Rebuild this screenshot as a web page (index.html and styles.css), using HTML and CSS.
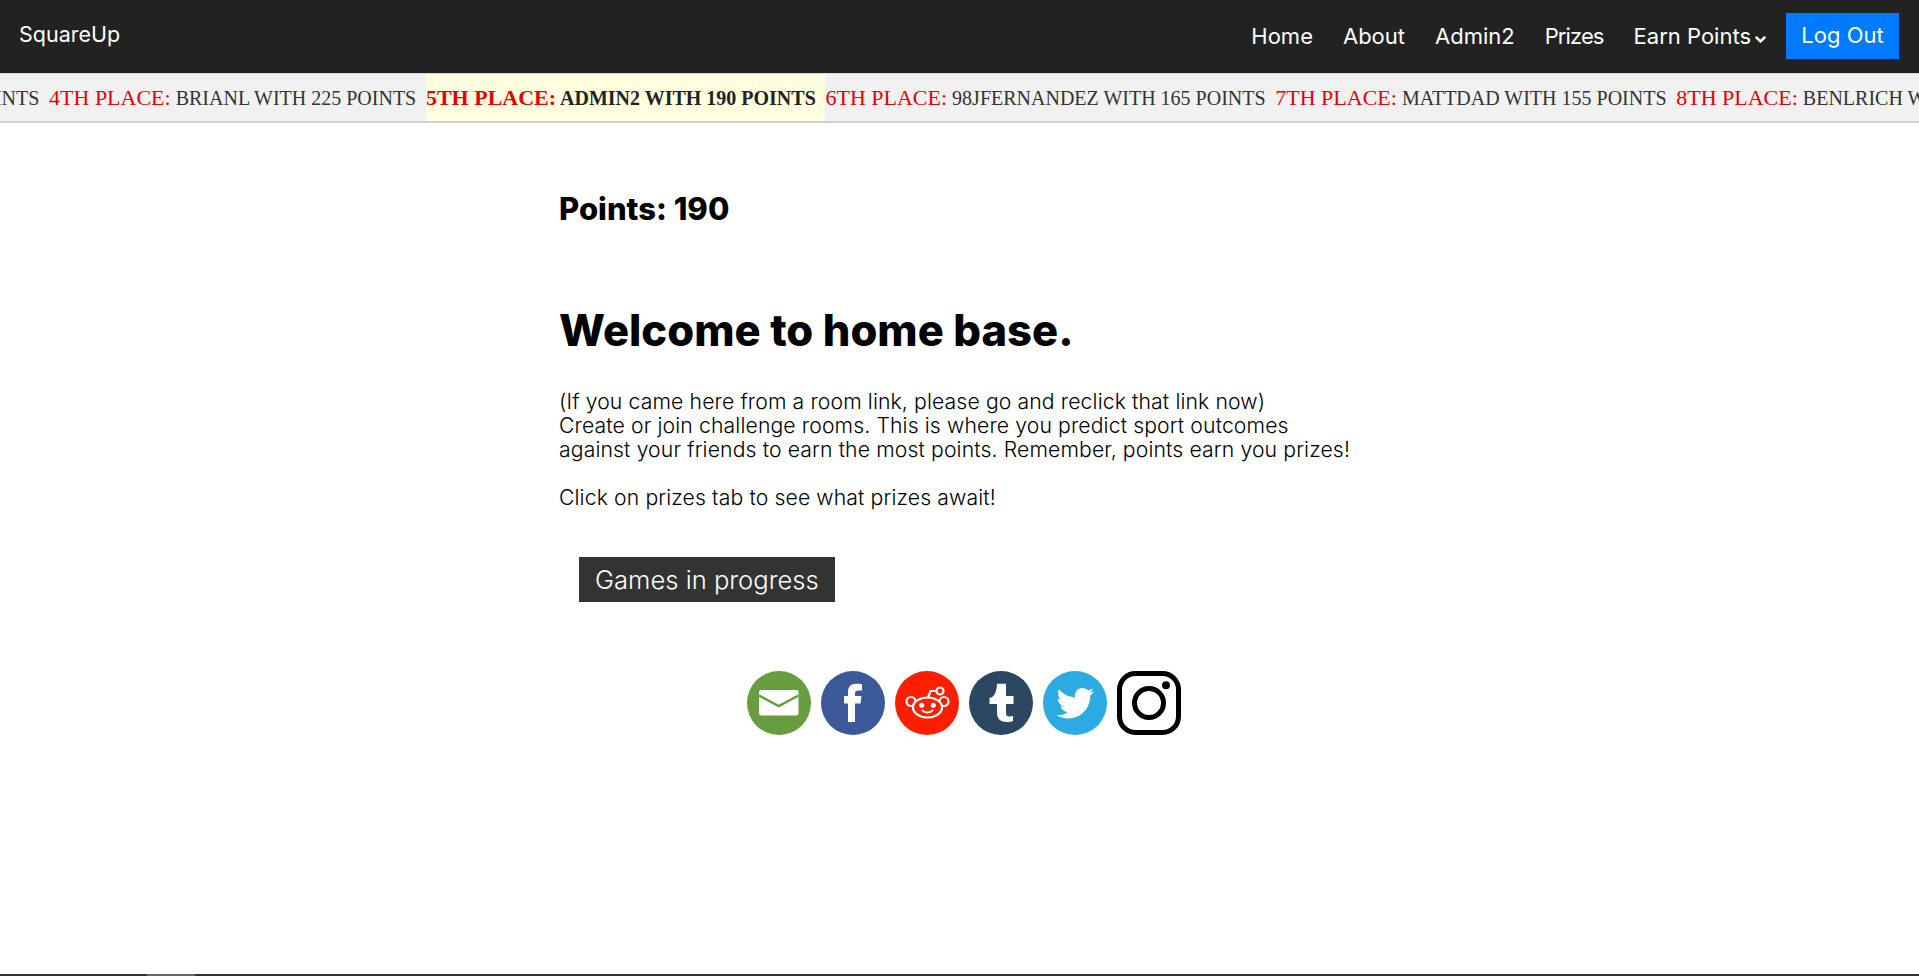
FILE: index.html
```html
<!DOCTYPE html>
<html lang="en">
<head>
  <meta charset="UTF-8" />
  <title>SquareUp</title>
  <link rel="stylesheet" href="styles.css">
</head>
<body>
  <nav class="navbar">
    <a class="brand" href="#">SquareUp</a>
    <ul class="nav-links">
      <li><a href="#">Home</a></li>
      <li><a href="#">About</a></li>
      <li><a href="#">Admin2</a></li>
      <li><a class="nav-tight" href="#">Prizes</a></li>
      <li>
        <a href="#">Earn Points<svg class="caret" viewBox="0 0 11 8" width="11" height="8"><path d="M1.500 1.500l4 4 4-4" fill="none" stroke="#fff" stroke-width="2.500" stroke-linecap="round"/></svg></a>
      </li>
      <li><a class="logout-btn" href="#">Log Out</a></li>
    </ul>
  </nav>

  <div class="ticker">
    <div class="ticker-track">
      <span class="ticker-item"><span class="place">3RD PLACE:</span> ADMIN WITH 230 POINTS</span>
      <span class="ticker-item"><span class="place">4TH PLACE:</span> BRIANL WITH 225 POINTS</span>
      <span class="ticker-item current"><span class="place">5TH PLACE:</span> ADMIN2 WITH 190 POINTS</span>
      <span class="ticker-item"><span class="place">6TH PLACE:</span> 98JFERNANDEZ WITH 165 POINTS</span>
      <span class="ticker-item"><span class="place">7TH PLACE:</span> MATTDAD WITH 155 POINTS</span>
      <span class="ticker-item"><span class="place">8TH PLACE:</span> BENLRICH WITH 150 POINTS</span>
    </div>
  </div>

  <main class="content">
    <h3 class="points">Points: 190</h3>
    <h1 class="welcome">Welcome to home base.</h1>
    <p class="intro">
      (If you came here from a room link, please go and reclick that link now)<br>
      Create or join challenge rooms. This is where you predict sport outcomes<br>
      against your friends to earn the most points. Remember, points earn you prizes!<br>
      <br>
      Click on prizes tab to see what prizes await!
    </p>
    <a class="games-btn" href="#">Games in progress</a>

    <div class="share-row">
      <a href="#" aria-label="Email">
        <svg class="share-icon" viewBox="0 0 64 64">
          <circle cx="32" cy="32" r="32" fill="#659d3f"/>
          <rect x="12" y="19" width="39.500" height="25.500" rx="2" fill="#fff"/>
          <path d="M12 24.500l19.750 10.500L51.500 24.500" fill="none" stroke="#659d3f" stroke-width="2.500"/>
        </svg>
      </a>
      <a href="#" aria-label="Facebook">
        <svg class="share-icon" viewBox="0 0 64 64">
          <circle cx="32" cy="32" r="32" fill="#3b5998"/>
          <path d="M27 51V32.500h-4V25h4v-4c0-5.500 3-8.300 8-8.300 2.300 0 4.500.2 6 .4v6.500h-3.500c-2.800 0-3.500 1.200-3.500 3.200V25h6.500l-1 7.500h-5.500V51z" fill="#fff"/>
        </svg>
      </a>
      <a href="#" aria-label="Reddit">
        <svg class="share-icon" viewBox="0 0 64 64">
          <circle cx="32" cy="32" r="32" fill="#ff1f00"/>
          <g fill="none" stroke="#fff" stroke-width="2.200">
            <circle cx="16" cy="30.500" r="4.500"/>
            <circle cx="49" cy="30.500" r="4.500"/>
            <ellipse cx="32.500" cy="36.500" rx="14.500" ry="10" fill="#ff1f00"/>
            <circle cx="45" cy="20" r="3.500"/>
            <path d="M33 26.500l2.500-6.500h6"/>
            <path d="M27.500 39.500c3 2.600 7 2.600 10 0" stroke-linecap="round"/>
          </g>
          <circle cx="26.700" cy="34.300" r="2.500" fill="#fff"/>
          <circle cx="38.300" cy="34.300" r="2.500" fill="#fff"/>
        </svg>
      </a>
      <a href="#" aria-label="Tumblr">
        <svg class="share-icon" viewBox="0 0 64 64">
          <circle cx="32" cy="32" r="32" fill="#2c4762"/>
          <path d="M28 12.700h9V25h7.500v8H37v9c0 2.500 1 3.500 3.500 3.500 1.300 0 2.700-.3 3.500-.7V50c-1.500.7-3.500 1-6 1-6.500 0-10-3-10-9.500V33h-7.500v-6c4.500-1 7-5 7.500-14.300z" fill="#fff"/>
        </svg>
      </a>
      <a href="#" aria-label="Twitter">
        <svg class="share-icon" viewBox="0 0 64 64">
          <circle cx="32" cy="32" r="32" fill="#2caae2"/>
          <path d="M51 20.500c-1.400.6-2.900 1-4.400 1.200 1.600-1 2.800-2.500 3.400-4.300-1.500.9-3.100 1.500-4.900 1.900-1.400-1.500-3.400-2.400-5.600-2.400-4.300 0-7.700 3.500-7.700 7.700 0 .6.100 1.200.2 1.800-6.400-.3-12.100-3.400-15.900-8.100-.7 1.100-1.100 2.500-1.100 3.900 0 2.700 1.400 5 3.400 6.400-1.300 0-2.500-.4-3.500-1v.1c0 3.700 2.700 6.900 6.200 7.600-.6.200-1.300.3-2 .3-.5 0-1 0-1.500-.1 1 3.100 3.900 5.300 7.200 5.400-2.700 2.100-6 3.300-9.600 3.300-.6 0-1.200 0-1.800-.1 3.400 2.200 7.500 3.500 11.800 3.500 14.200 0 22-11.800 22-22v-1c1.500-1.100 2.800-2.500 3.800-4z" fill="#fff"/>
        </svg>
      </a>
      <a href="#" aria-label="Instagram">
        <svg class="share-icon" viewBox="0 0 64 64">
          <rect x="2.500" y="2.500" width="59" height="59" rx="16" fill="#fff" stroke="#000" stroke-width="5"/>
          <circle cx="32" cy="32" r="14.500" fill="none" stroke="#000" stroke-width="5"/>
          <circle cx="49" cy="14.300" r="4" fill="#000"/>
        </svg>
      </a>
    </div>
  </main>

  <div class="page-scroll"><div class="page-scroll-thumb"></div></div>
</body>
</html>
```

FILE: styles.css
```css
* {
  box-sizing: border-box;
}
html,
body {
  height: 100%;
}
body {
  font-family: 'Inter', 'Liberation Sans', sans-serif;
  background-color: #ffffff;
  color: #000000;
  margin: 0;
  display: flex;
  flex-direction: column;
  overflow: hidden;
}
a {
  text-decoration: none;
}

.navbar {
  height: 73px;
  flex: none;
  background-color: #222222;
  display: flex;
  justify-content: space-between;
  align-items: center;
  padding: 0 20px 0 19px;
}
.brand {
  color: #ffffff;
  font-size: 21.500px;
  margin-top: -5px;
}
.nav-links {
  list-style: none;
  display: flex;
  align-items: center;
  gap: 30px;
  margin: 0 0 1px;
  padding: 0;
}
.nav-links a {
  color: #ffffff;
  font-size: 22px;
}
.nav-links .nav-tight {
  letter-spacing: -0.9px;
}
.caret {
  margin-left: 4px;
  vertical-align: 0;
}
.nav-links .logout-btn {
  display: block;
  background-color: #007bff;
  padding: 9px 0;
  height: 46px;
  width: 113px;
  margin-left: -10px;
  text-align: center;
  white-space: nowrap;
}

.ticker {
  height: 50px;
  flex: none;
  background-color: #f1f1f1;
  border-top: 1px solid #d8d8d8;
  border-bottom: 2px solid #d0d0d0;
  overflow: hidden;
}
.ticker-track {
  display: flex;
  height: 100%;
  width: max-content;
  margin-left: -322px;
  font-family: 'Liberation Serif', serif;
  font-size: 20px;
  line-height: 47px;
  color: #333333;
  white-space: nowrap;
}
.ticker-item {
  padding-right: 9.700px;
}
.place {
  color: #e60000;
  font-size: 22px;
}
.current {
  background-color: #ffffe0;
  font-weight: bold;
  color: #222222;
}

.content {
  flex: 1;
  padding: 68px 0 0 559px;
}
.points {
  font-size: 31px;
  font-weight: 800;
  margin: 0;
  line-height: 36px;
}
.welcome {
  font-size: 43.500px;
  font-weight: 800;
  margin: 79px 0 0;
  line-height: 48px;
}
.intro {
  font-size: 21.200px;
  font-weight: 300;
  letter-spacing: 0.12px;
  line-height: 24px;
  margin: 35px 0 0;
}
.games-btn {
  display: inline-block;
  margin: 48px 0 0 20px;
  background-color: #333333;
  color: #ffffff;
  font-size: 25.600px;
  font-weight: 300;
  line-height: 45px;
  padding: 0 16px;
  width: 256px;
}
.share-row {
  display: flex;
  gap: 10px;
  margin: 69px 0 0 188px;
}
.share-row a {
  display: block;
  height: 64px;
}
.share-icon {
  display: block;
  width: 64px;
  height: 64px;
}

.page-scroll {
  height: 2px;
  flex: none;
  background-color: #333333;
}
.page-scroll-thumb {
  width: 48px;
  height: 2px;
  margin-left: 147px;
  background-color: #666666;
}
```
